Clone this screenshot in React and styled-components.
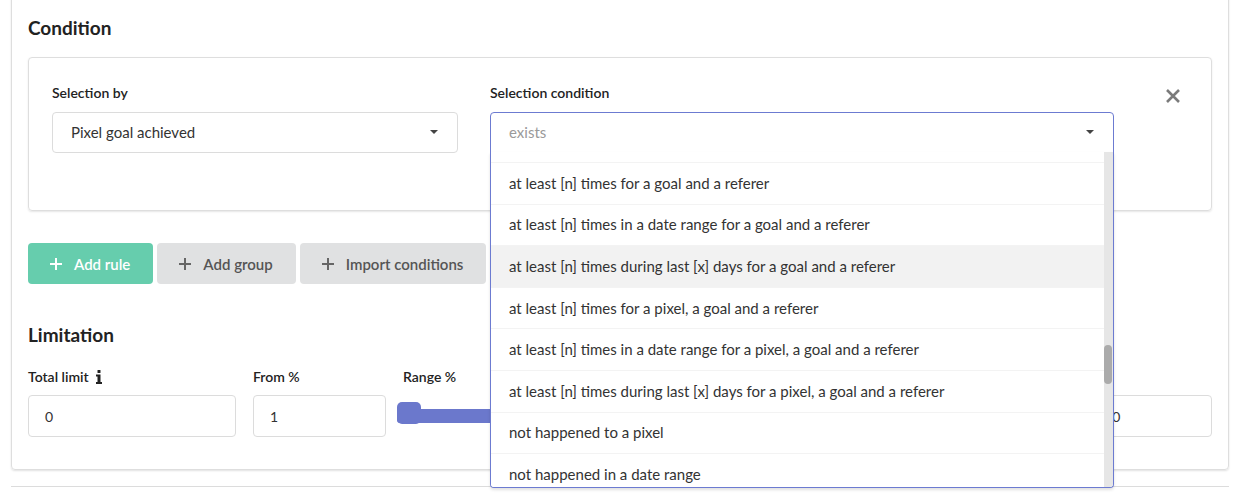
import React from 'react';
import styled, { createGlobalStyle } from 'styled-components';

const GlobalStyle = createGlobalStyle`
  html, body {
    margin: 0;
    background: #fff;
  }
  body {
    font-family: Lato, "Liberation Sans", sans-serif;
    color: #222;
    overflow: hidden;
  }
`;

const Page = styled.div`
  width: 1242px;
  height: 493px;
  padding: 0 13px 0 11px;
  box-sizing: border-box;
  overflow: hidden;
`;

const Card = styled.div`
  margin-top: -6px;
  border: 1px solid #dedede;
  border-radius: 4px;
  box-shadow: 0 1px 2px rgba(0, 0, 0, 0.12);
  padding: 21px 16px 32px 16px;
`;

const Divider = styled.div`
  margin-top: 16px;
  border-top: 1px solid #dcdcdc;
`;

const Heading = styled.h3`
  margin: ${(p) => p.$top || 0}px 0 0;
  font-size: 19px;
  line-height: 24px;
  font-weight: 700;
  color: #222;
`;

const RuleCard = styled.div`
  margin-top: 17px;
  border: 1px solid #dedede;
  border-radius: 4px;
  box-shadow: 0 1px 2px rgba(0, 0, 0, 0.1);
  padding: 25px 30px 57px 23px;
  display: flex;
  align-items: flex-start;
  gap: 32px;
`;

const Field = styled.div`
  width: ${(p) => (p.$width ? `${p.$width}px` : 'auto')};
  display: flex;
  flex-direction: column;
  position: relative;
`;

const Label = styled.label`
  font-size: 14px;
  line-height: 20px;
  font-weight: 600;
  color: #222;
  margin-bottom: ${(p) => p.$gap || 9}px;
  display: flex;
  align-items: center;
  gap: 7px;
`;

const SelectBox = styled.div`
  height: 41px;
  box-sizing: border-box;
  border: 1px solid ${(p) => (p.$open ? '#6c7bd1' : '#dcdcdc')};
  border-radius: ${(p) => (p.$open ? '4px 4px 0 0' : '4px')};
  padding: 0 18px 1px 18px;
  display: flex;
  align-items: center;
  justify-content: space-between;
  font-size: 15px;
  color: ${(p) => (p.$placeholder ? '#9a9a9a' : '#333')};
  position: relative;
  background: #fff;
`;

const Caret = styled.span`
  width: 0;
  height: 0;
  border-left: 4px solid transparent;
  border-right: 4px solid transparent;
  border-top: 4px solid #444;
  margin-right: 1px;
`;

const Menu = styled.div`
  position: absolute;
  top: 100%;
  left: -1px;
  right: -1px;
  height: 336px;
  box-sizing: border-box;
  border: 1px solid #6c7bd1;
  border-top: none;
  border-radius: 0 0 4px 4px;
  box-shadow: 0 2px 3px rgba(0, 0, 0, 0.12);
  background: #fff;
  overflow: hidden;
  z-index: 10;
`;

const MenuList = styled.div`
  margin-top: -31.5px;
  margin-right: 9px;
`;

const MenuItem = styled.div`
  height: 41.6px;
  box-sizing: border-box;
  border-top: 1px solid #f3f3f3;
  padding: 0 18px 1px;
  display: flex;
  align-items: center;
  font-size: 15px;
  color: #333;
  background: ${(p) => (p.$active ? '#f2f2f2' : '#fff')};
  white-space: nowrap;
`;

const ScrollTrack = styled.div`
  position: absolute;
  top: 0;
  right: 0;
  bottom: 0;
  width: 9px;
  background: #e6e6e6;
`;

const ScrollThumb = styled.div`
  position: absolute;
  top: 193px;
  left: 0;
  width: 8px;
  height: 39px;
  border-radius: 4px;
  background: #ababab;
`;

const CloseButton = styled.button`
  margin: 5px 0 0 auto;
  padding: 0;
  border: none;
  background: none;
  width: 16px;
  height: 16px;
  display: flex;
`;

const ButtonRow = styled.div`
  margin-top: 32px;
  display: flex;
  gap: 4px;
`;

const Button = styled.button`
  height: 41px;
  border: none;
  border-radius: 4px;
  padding: 0 23px 0 22px;
  display: flex;
  align-items: center;
  gap: 12px;
  font-family: inherit;
  font-size: 15px;
  font-weight: 600;
  background: ${(p) => (p.$primary ? '#66cdad' : '#e0e1e2')};
  color: ${(p) => (p.$primary ? '#fff' : '#555')};
`;

const LimitGrid = styled.div`
  margin-top: 20px;
  display: grid;
  grid-template-columns: 208px 133px 1fr 133px;
  column-gap: 17px;
`;

const Input = styled.div`
  height: 42px;
  box-sizing: border-box;
  border: 1px solid #dcdcdc;
  border-radius: 4px;
  padding: 0 16px;
  display: flex;
  align-items: center;
  font-size: 14px;
  color: #333;
`;

const SliderArea = styled.div`
  height: 42px;
  margin-left: -6px;
  display: flex;
  align-items: center;
  position: relative;
`;

const Track = styled.div`
  flex: 1;
  height: 14px;
  background: #6b78cc;
  border-radius: 3px;
`;

const Thumb = styled.div`
  position: absolute;
  top: 7px;
  left: ${(p) => (p.$right ? 'auto' : '0')};
  right: ${(p) => (p.$right ? '0' : 'auto')};
  width: 24px;
  height: 22px;
  border-radius: 5px;
  background: #6b78cc;
`;

const PlusIcon = ({ color }) => (
  <svg width="12" height="12" viewBox="0 0 12 12">
    <path d="M6 0v12M0 6h12" stroke={color} strokeWidth="2" />
  </svg>
);

const CloseIcon = () => (
  <svg width="16" height="16" viewBox="0 0 16 16">
    <path d="M2 2l12 12M14 2L2 14" stroke="#7b7b7b" strokeWidth="2.6" />
  </svg>
);

const InfoIcon = () => (
  <svg width="6" height="14" viewBox="0 0 6 14">
    <rect x="1.5" y="0" width="3" height="3" rx="0.5" fill="#222" />
    <path d="M0 4.5h4.5v7.5H6V14H0v-2h1.5V6.5H0z" fill="#222" />
  </svg>
);

const options = [
  'at least [n] times for a goal',
  'at least [n] times for a goal and a referer',
  'at least [n] times in a date range for a goal and a referer',
  'at least [n] times during last [x] days for a goal and a referer',
  'at least [n] times for a pixel, a goal and a referer',
  'at least [n] times in a date range for a pixel, a goal and a referer',
  'at least [n] times during last [x] days for a pixel, a goal and a referer',
  'not happened to a pixel',
  'not happened in a date range',
];

export default function App() {
  return (
    <Page>
      <GlobalStyle />
      <Card>
        <Heading>Condition</Heading>
        <RuleCard>
          <Field $width={406}>
            <Label>Selection by</Label>
            <SelectBox>
              Pixel goal achieved
              <Caret />
            </SelectBox>
          </Field>
          <Field $width={624}>
            <Label>Selection condition</Label>
            <SelectBox $open $placeholder>
              exists
              <Caret />
              <Menu>
                <MenuList>
                  {options.map((o, i) => (
                    <MenuItem key={o} $active={i === 3}>
                      {o}
                    </MenuItem>
                  ))}
                </MenuList>
                <ScrollTrack>
                  <ScrollThumb />
                </ScrollTrack>
              </Menu>
            </SelectBox>
          </Field>
          <CloseButton aria-label="Remove">
            <CloseIcon />
          </CloseButton>
        </RuleCard>

        <ButtonRow>
          <Button $primary>
            <PlusIcon color="#fff" />
            Add rule
          </Button>
          <Button>
            <PlusIcon color="#666" />
            Add group
          </Button>
          <Button>
            <PlusIcon color="#666" />
            Import conditions
          </Button>
        </ButtonRow>

        <Heading $top={39}>Limitation</Heading>
        <LimitGrid>
          <Field>
            <Label $gap={8}>
              Total limit <InfoIcon />
            </Label>
            <Input>0</Input>
          </Field>
          <Field>
            <Label $gap={8}>From %</Label>
            <Input>1</Input>
          </Field>
          <Field>
            <Label $gap={8}>Range %</Label>
            <SliderArea>
              <Track />
              <Thumb />
              <Thumb $right />
            </SliderArea>
          </Field>
          <Field>
            <Label $gap={8}>To %</Label>
            <Input>100</Input>
          </Field>
        </LimitGrid>
      </Card>
      <Divider />
    </Page>
  );
}
